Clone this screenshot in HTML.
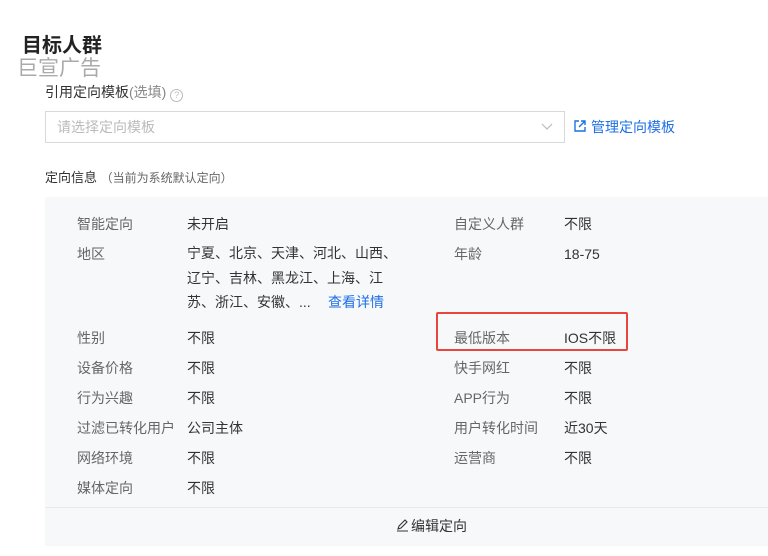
<!DOCTYPE html>
<html><head><meta charset="utf-8"><style>
body{margin:0;width:768px;height:556px;background:#fff;font-family:"Liberation Sans","Noto Sans CJK SC",sans-serif;position:relative;overflow:hidden;color:#333}
.a{position:absolute;white-space:nowrap;line-height:16px}
.l{color:#666;font-size:14px}
.v{color:#333;font-size:14px}
</style></head><body>
<div class="a" style="left:22px;top:35px;font-size:20px;font-weight:bold;color:#222;line-height:22px">目标人群</div>
<div class="a" style="left:17px;top:57px;font-size:21px;color:#aaa;line-height:24px">巨宣广告</div>
<div class="a" style="left:45px;top:84px;font-size:14px;color:#333">引用定向模板<span style="color:#888">(选填)</span> <span style="display:inline-block;width:11px;height:11px;border:1px solid #bbb;border-radius:50%;font-size:9px;line-height:11px;text-align:center;color:#bbb;vertical-align:-1px">?</span></div>
<div class="a" style="left:45px;top:111px;width:518px;height:30px;border:1px solid #d9d9d9;box-sizing:content-box"></div>
<div class="a" style="left:57px;top:119px;font-size:14px;color:#bbb">请选择定向模板</div>
<svg class="a" style="left:541px;top:121px" width="12" height="10"><path d="M1 3l5 5 5-5" stroke="#bbb" fill="none" stroke-width="1.2"/></svg>
<svg class="a" style="left:573px;top:119px" width="14" height="14"><path d="M6 2H2v10h10V8M8 2h4v4M12 2L6 8" stroke="#1f6fe5" fill="none" stroke-width="1.4"/></svg>
<div class="a" style="left:591px;top:119px;font-size:14px;color:#1f6fe5">管理定向模板</div>
<div class="a" style="left:45px;top:170px;font-size:13px;color:#333">定向信息 <span style="font-size:12px;color:#666">（当前为系统默认定向）</span></div>
<div class="a" style="left:45px;top:197px;width:723px;height:349px;background:#f7f8fa"></div>
<div class="a" style="left:45px;top:507px;width:723px;height:1px;background:#e8e8e8"></div>
<div class="a l" style="left:77px;top:216px">智能定向</div><div class="a v" style="left:187px;top:216px">未开启</div>
<div class="a l" style="left:454px;top:216px">自定义人群</div><div class="a v" style="left:564px;top:216px">不限</div>
<div class="a l" style="left:77px;top:246px">地区</div>
<div class="a v" style="left:187px;top:241px;line-height:24.5px">宁夏、北京、天津、河北、山西、<br>辽宁、吉林、黑龙江、上海、江<br>苏、浙江、安徽、...</div>
<div class="a v" style="left:328px;top:294px;color:#1f6fe5">查看详情</div>
<div class="a l" style="left:454px;top:246px">年龄</div><div class="a v" style="left:564px;top:246px">18-75</div>
<div class="a" style="left:436px;top:312px;width:188px;height:35px;border:2px solid #e8453c;border-radius:2px"></div>
<div class="a l" style="left:77px;top:330px">性别</div><div class="a v" style="left:187px;top:330px">不限</div>
<div class="a l" style="left:454px;top:330px">最低版本</div><div class="a v" style="left:564px;top:330px">IOS不限</div>
<div class="a l" style="left:77px;top:360px">设备价格</div><div class="a v" style="left:187px;top:360px">不限</div>
<div class="a l" style="left:454px;top:360px">快手网红</div><div class="a v" style="left:564px;top:360px">不限</div>
<div class="a l" style="left:77px;top:390px">行为兴趣</div><div class="a v" style="left:187px;top:390px">不限</div>
<div class="a l" style="left:454px;top:390px">APP行为</div><div class="a v" style="left:564px;top:390px">不限</div>
<div class="a l" style="left:77px;top:420px">过滤已转化用户</div><div class="a v" style="left:187px;top:420px">公司主体</div>
<div class="a l" style="left:454px;top:420px">用户转化时间</div><div class="a v" style="left:564px;top:420px">近30天</div>
<div class="a l" style="left:77px;top:450px">网络环境</div><div class="a v" style="left:187px;top:450px">不限</div>
<div class="a l" style="left:454px;top:450px">运营商</div><div class="a v" style="left:564px;top:450px">不限</div>
<div class="a l" style="left:77px;top:480px">媒体定向</div><div class="a v" style="left:187px;top:480px">不限</div>
<svg class="a" style="left:396px;top:519px" width="13" height="13"><path d="M2 10l1-3 6-6 2 2-6 6zM1 12h11" stroke="#333" fill="none" stroke-width="1.1"/></svg>
<div class="a v" style="left:411px;top:518px">编辑定向</div>
</body></html>
